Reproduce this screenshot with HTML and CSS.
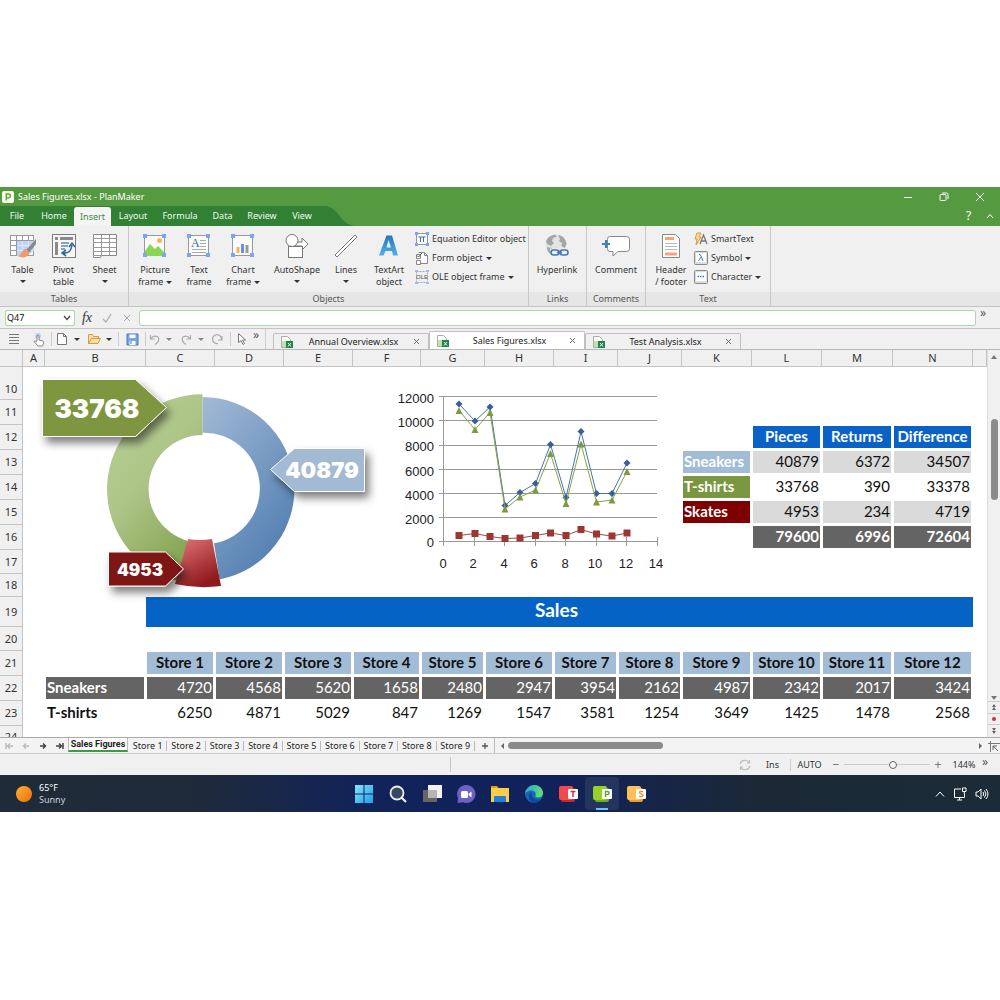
FILE: index.html
```html
<!DOCTYPE html>
<html lang="en">
<head>
<meta charset="utf-8">
<meta name="viewport" content="width=device-width, initial-scale=1">
<title>Sales Figures.xlsx - PlanMaker</title>
<link rel="stylesheet" href="styles.css">
</head>
<body>
<main class="desktop">

<header class="titlebar">
  <div class="title-row">
    <svg class="app-icon" viewBox="0 0 12 12" width="12" height="12"><rect width="12" height="12" rx="2" fill="#f4faf0"/><path d="M4.3 9.5V3h2.2a1.9 1.9 0 0 1 0 3.9H4.3" fill="none" stroke="#6aa92f" stroke-width="1.5"/></svg>
    <h1 class="window-title">Sales Figures.xlsx - PlanMaker</h1>
    <div class="window-controls">
      <button aria-label="Minimize"><svg width="10" height="10" viewBox="0 0 10 10"><path d="M1 5.5h8" class="w"/></svg></button>
      <button aria-label="Restore"><svg width="10" height="10" viewBox="0 0 10 10"><rect x="1" y="2.500" width="6" height="6" rx="1" class="w"/><path d="M3 1h4.500q1.500 0 1.500 1.500V7" class="w"/></svg></button>
      <button aria-label="Close"><svg width="10" height="10" viewBox="0 0 10 10"><path d="M1 1l8 8M9 1L1 9" class="w"/></svg></button>
    </div>
  </div>
  <div class="menu-row">
    <nav class="menu">
      <button class="m34">File</button><button class="m40">Home</button><button class="m37 on">Insert</button><button class="m44">Layout</button><button class="m50">Formula</button><button class="m35">Data</button><button class="m44">Review</button><button class="m36">View</button>
    </nav>
    <svg class="menu-tail" width="34" height="20" viewBox="0 0 34 20"><path d="M0 0h5c14 1 14 17 29 20H0z" fill="#318034"/></svg>
    <div class="menu-side">
      <button aria-label="Help">?</button>
      <button aria-label="Collapse ribbon"><svg width="8" height="6" viewBox="0 0 8 6"><path d="M1 5l3-3.500L7 5" class="w"/></svg></button>
    </div>
  </div>
</header>

<section class="ribbon" aria-label="Insert">
  <div class="group tables">
    <div class="tools">
      <button class="big b41"><svg width="28" height="26" viewBox="0 0 28 26"><rect x="1.500" y="2.500" width="23" height="20" fill="#fff" stroke="#999"/><path d="M1 7.500h24M1 12.500h24M1 17.500h24M7.500 3v20M13.500 3v20M19.500 3v20" stroke="#999"/><path d="M8 8h17v10l-8 5H8z" fill="#bcd4fb"/><path d="M8 12.500h17M8 17.500h16M13.500 8v15M19.500 8v12" stroke="#dfeafd"/><path d="M27 6L17 17l3 3 7-9z" fill="#8a8a8a"/><path d="M17 16c-4 0-4 5-8 7 5 3 11 1 11-4z" fill="#f5986a"/></svg><span>Table</span><i class="dn"></i></button>
      <button class="big b41"><svg width="26" height="26" viewBox="0 0 26 26"><rect x="1.500" y="1.500" width="23" height="23" fill="#f7f7f7" stroke="#7d7d7d"/><path d="M4 5.500h3M5.500 9v13" stroke="#8b8b8b" stroke-width="3"/><path d="M9 5.500h13" stroke="#8b8b8b" stroke-width="3"/><path d="M10 10h8M10 13h7M10 16h4" stroke="#5d89b5" stroke-width="1.300"/><path d="M12 20q8 1 9-8M18 14l3-4 3 4M15 17l-4 3 4 3" fill="none" stroke="#33699c" stroke-width="1.600"/></svg><span>Pivot<br>table</span></button>
      <button class="big b41"><svg width="26" height="26" viewBox="0 0 26 26"><path d="M1.500 1.500h23v21h-15l-1 2h-7z" fill="#fff" stroke="#888"/><path d="M1 5.500h23M1 9.500h23M1 14.500h23M1 18.500h23M9.500 2v20M17.500 2v20M1 22.500h8" stroke="#999"/></svg><span>Sheet</span><i class="dn"></i></button>
    </div>
    <h2>Tables</h2>
  </div>
  <div class="group objects">
    <div class="tools">
      <button class="big b44"><svg width="26" height="26" viewBox="0 0 26 26"><rect x="2.500" y="2.500" width="20" height="20" fill="#fbfbfb" stroke="#999"/><path d="M3 18l5-7 5 5 3-3 6 6v4H3z" fill="#8ad554"/><circle cx="17.500" cy="7.500" r="2.500" fill="#f9b25f"/><path d="M1 1h4v4H1zM20 1h4v4h-4zM1 20h4v4H1zM20 20h4v4h-4z" fill="#7aa5f2"/></svg><span>Picture<br>frame <i class="dn"></i></span></button>
      <button class="big b44"><svg width="26" height="26" viewBox="0 0 26 26"><rect x="2.500" y="2.500" width="20" height="20" fill="#fbfbfb" stroke="#999"/><text x="5" y="14" class="ic-a">A</text><path d="M14 7.500h6M14 10.500h6M14 13.500h6M6 16.500h14M6 19.500h14" stroke="#aaa"/><path d="M1 1h4v4H1zM20 1h4v4h-4zM1 20h4v4H1zM20 20h4v4h-4z" fill="#7aa5f2"/></svg><span>Text<br>frame</span></button>
      <button class="big b44"><svg width="26" height="26" viewBox="0 0 26 26"><rect x="2.500" y="2.500" width="20" height="20" fill="#fbfbfb" stroke="#999"/><path d="M8 14v6" stroke="#f6b35c" stroke-width="3"/><path d="M12.500 11v9" stroke="#5b95ea" stroke-width="3"/><path d="M17 12v8" stroke="#9a9a9a" stroke-width="3"/><path d="M1 1h4v4H1zM20 1h4v4h-4zM1 20h4v4H1zM20 20h4v4h-4z" fill="#7aa5f2"/></svg><span>Chart<br>frame <i class="dn"></i></span></button>
      <button class="big b64"><svg width="26" height="26" viewBox="0 0 26 26"><path d="M11 9h7V5l6 6-6 6v-4h-7z" fill="#fff" stroke="#777"/><circle cx="8" cy="7.500" r="6" fill="#fff" stroke="#777"/><rect x="4.500" y="13.500" width="14" height="11" fill="#fff" stroke="#777"/></svg><span>AutoShape</span><i class="dn"></i></button>
      <button class="big b34"><svg width="26" height="26" viewBox="0 0 26 26"><path d="M2 22L22 2l2 2L4 24z" fill="#fff" stroke="#777"/></svg><span>Lines</span><i class="dn"></i></button>
      <button class="big b52"><svg width="26" height="26" viewBox="0 0 26 26"><defs><linearGradient id="ta" x1="0" y1="0" x2="0" y2="1"><stop offset="0" stop-color="#2574b8"/><stop offset="1" stop-color="#4fb2ee"/></linearGradient></defs><path d="M10.500 2.500h5.500l6 20h-5l-1-4.500H9.500L7.500 22.500h-4.500zM12.500 7L10.500 14.500h4.500z" fill="url(#ta)"/></svg><span>TextArt<br>object</span></button>
      <div class="stack">
        <button><svg width="14" height="14" viewBox="0 0 14 14"><rect x="1.500" y="1.500" width="11" height="11" fill="#fafafa" stroke="#999"/><path d="M3.500 5h7M5.500 5v5M8.500 5v5" stroke="#3777b5" fill="none"/><path d="M0 0h3v3H0zM11 0h3v3h-3zM0 11h3v3H0zM11 11h3v3h-3z" fill="#7aa5f2"/></svg>Equation Editor object</button>
        <button><svg width="14" height="14" viewBox="0 0 14 14"><path d="M3.500 1.500h6l3 3v8h-9" fill="#fff" stroke="#888"/><path d="M9.500 1.500v3h3" fill="none" stroke="#888"/><path d="M1.500 3.500h4v4h-4zM1.500 9.500h4v4h-4z" fill="#fff" stroke="#888"/><path d="M2 4.500l1.500 1.500L7 2" fill="none" stroke="#555"/></svg>Form object <i class="dn"></i></button>
        <button><svg width="14" height="14" viewBox="0 0 14 14"><rect x="1.500" y="1.500" width="11" height="11" fill="#eee" stroke="#aaa" stroke-dasharray="2 1"/><text x="1" y="9" class="ic-ole">OLE</text><path d="M0 0h3v2H0zM11 0h3v2h-3zM0 12h3v2H0zM11 12h3v2h-3z" fill="#9bbcf2"/></svg>OLE object frame <i class="dn"></i></button>
      </div>
    </div>
    <h2>Objects</h2>
  </div>
  <div class="group links">
    <div class="tools"><button class="big b56"><svg width="26" height="26" viewBox="0 0 26 26"><circle cx="12" cy="12" r="10.500" fill="#e4e4e4"/><path d="M2 8c2-4 5-6 9-6.500l2 2-4 1.500-1 3 2 2-3 3-4-2zM14 2c6 1 8 5 8.500 9l-2 4-3-2 .5-3-3-2 1-2zM3 14l5 1 2 5-1 2c-4-1-6-4-6-8z" fill="#a5a5a5"/><path d="M6 15.500h20v8H6z" fill="#f0f0f0"/><g fill="none" stroke="#4078b4" stroke-width="1.600"><rect x="7" y="17" width="8" height="5" rx="2.500"/><rect x="16" y="17" width="8" height="5" rx="2.500"/><path d="M13 19.500h5"/></g></svg><span>Hyperlink</span></button></div>
    <h2>Links</h2>
  </div>
  <div class="group comments">
    <div class="tools"><button class="big b56"><svg width="30" height="26" viewBox="0 0 30 26"><path d="M8.500 3.500h17q3 0 3 3v9q0 3-3 3H17l-5 4.500v-4.500H8.500q-2 0-2-3v-9q0-3 2-3z" fill="#fff" stroke="#888"/><path d="M1 11h8M5 7v8" stroke="#3b7fc4" stroke-width="2"/></svg><span>Comment</span></button></div>
    <h2>Comments</h2>
  </div>
  <div class="group text">
    <div class="tools"><button class="big b46"><svg width="26" height="26" viewBox="0 0 26 26"><path d="M4.500 1.500h13l4 4v19h-17z" fill="#fff" stroke="#888"/><path d="M7 5.500h9M7 21h12" stroke="#f6a27c" stroke-width="3"/><path d="M7 10.500h12M7 13.500h12M7 16.500h12" stroke="#bbb"/></svg><span>Header<br>/ footer</span></button>
      <div class="stack">
        <button><svg width="14" height="14" viewBox="0 0 14 14"><path d="M3 1h4L5 5h2l-5 8 1-6H1z" fill="#fcd9a0" stroke="#dd9a3c"/><path d="M6 12l3.500-9L13 12M7.500 9h4.500" fill="none" stroke="#777" stroke-width="1.300"/></svg>SmartText</button>
        <button><svg width="14" height="14" viewBox="0 0 14 14"><rect x=".5" y=".5" width="13" height="13" rx="1" fill="#ddd" stroke="#888"/><rect x="2" y="2" width="10" height="9" fill="#fff"/><path d="M5 3.500q1.500-.5 2 1.500l2 5M7 6l-2.500 4" fill="none" stroke="#3b7fc4"/></svg>Symbol <i class="dn"></i></button>
        <button><svg width="14" height="14" viewBox="0 0 14 14"><rect x=".5" y=".5" width="13" height="13" rx="1" fill="#ddd" stroke="#888"/><rect x="2" y="2" width="10" height="9" fill="#fff"/><path d="M3.500 6.500h7" stroke="#3b7fc4" stroke-width="1.500" stroke-dasharray="1.500 1"/></svg>Character <i class="dn"></i></button>
      </div>
    </div>
    <h2>Text</h2>
  </div>
</section>

<section class="formula-bar">
  <div class="namebox"><select aria-label="Cell reference"><option>Q47</option></select><svg width="8" height="6" viewBox="0 0 8 6"><path d="M1 1l3 3.500L7 1" fill="none" stroke="#444" stroke-width="1.200"/></svg></div>
  <button class="fx" aria-label="Insert function">fx</button>
  <button aria-label="Accept"><svg width="10" height="10" viewBox="0 0 10 10"><path d="M1 6l3 3 5-8" fill="none" stroke="#aaa" stroke-width="1.200"/></svg></button>
  <button aria-label="Cancel"><svg width="10" height="10" viewBox="0 0 10 10"><path d="M2 2l6 6M8 2L2 8" stroke="#aaa"/></svg></button>
  <input type="text" aria-label="Formula">
  <button class="more" aria-label="More">»</button>
</section>

<section class="toolbar">
  <button class="t28" aria-label="Menu"><svg width="12" height="14" viewBox="0 0 12 14"><path d="M1 2.500h10M1 5.500h10M1 8.500h10M1 11.500h10" stroke="#777"/></svg></button>
  <button class="t20" aria-label="Touch mode"><svg width="13" height="15" viewBox="0 0 13 15"><circle cx="6" cy="4" r="3" fill="#b7cff6"/><path d="M5 9V4q1-1.500 2 0v4l4 1q1 .5.500 2l-1 3H6L2 9.500q.5-1.500 3 .5" fill="#fff" stroke="#888"/></svg></button>
  <i class="sep"></i>
  <button class="t14" aria-label="New"><svg width="12" height="14" viewBox="0 0 12 14"><path d="M1.500 1.500h6l3 3v8h-9zM7.500 1.500v3h3" fill="#fff" stroke="#777"/></svg></button>
  <button class="t16" aria-label="New options"><i class="dn"></i></button>
  <button class="t18" aria-label="Open"><svg width="15" height="14" viewBox="0 0 15 14"><path d="M1.500 11.500v-9h4l1 2h5v2M1.500 11.500l3-5h9l-2.500 5z" fill="#fde0b0" stroke="#e0973a"/></svg></button>
  <button class="t12" aria-label="Open options"><i class="dn"></i></button>
  <i class="sep"></i>
  <button class="t20" aria-label="Save"><svg width="13" height="13" viewBox="0 0 13 13"><path d="M1 1h11v11H1z" fill="#78a3e8" stroke="#4a74b8"/><path d="M3.500 1.500h6v3.500h-6zM3.500 8h6v4h-6z" fill="#fff"/><path d="M5 8v3" stroke="#4a74b8"/></svg></button>
  <i class="sep"></i>
  <button class="t12" aria-label="Undo"><svg width="12" height="12" viewBox="0 0 12 12"><path d="M1.500 2v4h4M2 5.500q3-4 7-1.500 2.500 4-3 7.500" fill="none" stroke="#aaa" stroke-width="1.200"/></svg></button>
  <button class="t16" aria-label="Undo options"><i class="dn soft"></i></button>
  <button class="t18" aria-label="Redo"><svg width="12" height="12" viewBox="0 0 12 12"><path d="M10.500 2v4h-4M10 5.500Q7 1.500 3 4q-2.500 4 3 7.500" fill="none" stroke="#aaa" stroke-width="1.200"/></svg></button>
  <button class="t12" aria-label="Redo options"><i class="dn soft"></i></button>
  <button class="t20" aria-label="Repeat"><svg width="12" height="12" viewBox="0 0 12 12"><path d="M11 3v4H7M10.500 6.500A4.500 4.500 0 1 0 7 10.500" fill="none" stroke="#aaa" stroke-width="1.200"/></svg></button>
  <i class="sep"></i>
  <button class="t16" aria-label="Select"><svg width="10" height="14" viewBox="0 0 10 14"><path d="M1.500 1.500v9l2.500-2 2 4 1.500-1-2-3.500h3z" fill="#fff" stroke="#777"/></svg></button>
  <button class="t12 more" aria-label="More">»</button>
  <i class="sep tall"></i>
  <div class="doc-tabs">
    <div class="doc-tab"><svg width="14" height="14" viewBox="0 0 14 14"><path d="M1.500 1.500h6l3 3v8h-9z" fill="#fff" stroke="#aaa"/><path d="M2 6h4v6H2z" fill="#bfe3a8"/><path d="M6 6h7v7H6z" fill="#1d8348"/><path d="M8 8l3 3.500M11 8l-3 3.500" stroke="#fff"/></svg><button>Annual Overview.xlsx</button><button class="x" aria-label="Close Annual Overview.xlsx"><svg width="7" height="7" viewBox="0 0 7 7"><path d="M1 1l5 5M6 1L1 6" stroke="#666"/></svg></button></div>
    <div class="doc-tab on"><svg width="14" height="14" viewBox="0 0 14 14"><path d="M1.500 1.500h6l3 3v8h-9z" fill="#fff" stroke="#aaa"/><path d="M2 6h4v6H2z" fill="#bfe3a8"/><path d="M6 6h7v7H6z" fill="#1d8348"/><path d="M8 8l3 3.500M11 8l-3 3.500" stroke="#fff"/></svg><button>Sales Figures.xlsx</button><button class="x" aria-label="Close Sales Figures.xlsx"><svg width="7" height="7" viewBox="0 0 7 7"><path d="M1 1l5 5M6 1L1 6" stroke="#666"/></svg></button></div>
    <div class="doc-tab"><svg width="14" height="14" viewBox="0 0 14 14"><path d="M1.500 1.500h6l3 3v8h-9z" fill="#fff" stroke="#aaa"/><path d="M2 6h4v6H2z" fill="#bfe3a8"/><path d="M6 6h7v7H6z" fill="#1d8348"/><path d="M8 8l3 3.500M11 8l-3 3.500" stroke="#fff"/></svg><button>Test Analysis.xlsx</button><button class="x" aria-label="Close Test Analysis.xlsx"><svg width="7" height="7" viewBox="0 0 7 7"><path d="M1 1l5 5M6 1L1 6" stroke="#666"/></svg></button></div>
  </div>
</section>

<section class="work">
  <div class="sheet">
    <table class="grid">
      <colgroup><col class="c23"><col class="c22"><col class="c101"><col class="c69"><col class="c69"><col class="c69"><col class="c68"><col class="c64"><col class="c69"><col class="c64"><col class="c64"><col class="c70"><col class="c70"><col class="c71"><col class="c80"><col></colgroup>
      <thead><tr><th></th><th>A</th><th>B</th><th>C</th><th>D</th><th>E</th><th>F</th><th>G</th><th>H</th><th>I</th><th>J</th><th>K</th><th>L</th><th>M</th><th>N</th><th></th></tr></thead>
      <tbody>
        <tr class="h33"><th>10</th><td colspan="15"></td></tr>
        <tr><th>11</th><td colspan="15"></td></tr>
        <tr><th>12</th><td colspan="11"></td><td class="blue">Pieces</td><td class="blue">Returns</td><td class="blue">Difference</td><td></td></tr>
        <tr><th>13</th><td colspan="10"></td><td class="name sky">Sneakers</td><td class="pale">40879</td><td class="pale">6372</td><td class="pale">34507</td><td></td></tr>
        <tr><th>14</th><td colspan="10"></td><td class="name olive">T-shirts</td><td>33768</td><td>390</td><td>33378</td><td></td></tr>
        <tr><th>15</th><td colspan="10"></td><td class="name maroon">Skates</td><td class="pale">4953</td><td class="pale">234</td><td class="pale">4719</td><td></td></tr>
        <tr><th>16</th><td colspan="11"></td><td class="gray b">79600</td><td class="gray b">6996</td><td class="gray b">72604</td><td></td></tr>
        <tr class="h24"><th>17</th><td colspan="15"></td></tr>
        <tr class="h23"><th>18</th><td colspan="15"></td></tr>
        <tr class="h30"><th>19</th><td colspan="2"></td><td colspan="12" class="banner">Sales</td><td></td></tr>
        <tr class="h24"><th>20</th><td colspan="15"></td></tr>
        <tr><th>21</th><td></td><td></td><td class="store">Store 1</td><td class="store">Store 2</td><td class="store">Store 3</td><td class="store">Store 4</td><td class="store">Store 5</td><td class="store">Store 6</td><td class="store">Store 7</td><td class="store">Store 8</td><td class="store">Store 9</td><td class="store">Store 10</td><td class="store">Store 11</td><td class="store">Store 12</td><td></td></tr>
        <tr><th>22</th><td></td><td class="name gray">Sneakers</td><td class="gray">4720</td><td class="gray">4568</td><td class="gray">5620</td><td class="gray">1658</td><td class="gray">2480</td><td class="gray">2947</td><td class="gray">3954</td><td class="gray">2162</td><td class="gray">4987</td><td class="gray">2342</td><td class="gray">2017</td><td class="gray">3424</td><td></td></tr>
        <tr><th>23</th><td></td><td class="name">T-shirts</td><td>6250</td><td>4871</td><td>5029</td><td>847</td><td>1269</td><td>1547</td><td>3581</td><td>1254</td><td>3649</td><td>1425</td><td>1478</td><td>2568</td><td></td></tr>
        <tr class="h11"><th><div class="cut">24</div></th><td colspan="15"></td></tr>
      </tbody>
    </table>

    <svg class="chart donut" width="350" height="235" viewBox="35 370 350 235" role="img" aria-label="Share of pieces by product">
      <defs>
        <linearGradient id="gb" x1="0" y1="0" x2=".6" y2="1"><stop offset="0" stop-color="#a3bad6"/><stop offset="1" stop-color="#5480b2"/></linearGradient>
        <linearGradient id="gg" x1="0" y1="0" x2=".6" y2="1"><stop offset="0" stop-color="#b9d095"/><stop offset=".5" stop-color="#aec588"/><stop offset="1" stop-color="#86a552"/></linearGradient>
        <linearGradient id="gr" x1="0" y1="0" x2=".5" y2="1"><stop offset="0" stop-color="#e2757a"/><stop offset="1" stop-color="#8f1a1c"/></linearGradient>
        <filter id="sh" x="-20%" y="-20%" width="150%" height="170%"><feDropShadow dx="4" dy="6" stdDeviation="4" flood-color="#000" flood-opacity=".5"/></filter>
      </defs>
      <path d="M202.500 397A92 92 0 0 1 219.500 579.400L214 543.300A55.700 55.700 0 0 0 202.500 432.800z" fill="url(#gb)"/>
      <path d="M202.500 394.300A95 95 0 0 0 180 581.700L188 541A54 54 0 0 1 202.500 435z" fill="url(#gg)"/>
      <path d="M188 539q12 2 24 0l9 47q-23 3-46-2z" fill="url(#gr)"/>
      <g stroke="#fff" filter="url(#sh)">
        <path d="M42.500 379.500h93l31 28-31 29h-93z" fill="#7e9641"/>
      </g>
      <g stroke="#fff" filter="url(#sh)">
        <path d="M364.500 448.500h-70l-24 21 24 22h70z" fill="#a2bad3"/>
      </g>
      <g stroke="#fff" filter="url(#sh)">
        <path d="M108.500 552h57l18 17-18 17h-57z" fill="#7f1512"/>
      </g>
      <g class="callout"><text x="97" y="418" class="s26">33768</text><text x="322" y="478" class="s22">40879</text><text x="140" y="576" class="s17">4953</text></g>
    </svg>

    <svg class="chart line" width="290" height="190" viewBox="380 385 290 190" role="img" aria-label="Pieces, returns and difference by store">
      <path d="M439 396.500h218M439 420.500h218M439 445.500h218M439 469.500h218M439 493.500h218M439 517.500h218M439 541.500h218M443.500 396v150M474.500 537v9M504.500 537v9M535.500 537v9M565.500 537v9M596.500 537v9M626.500 537v9M657.500 537v9" stroke="#999" fill="none"/>
      <g class="axis y"><text x="434" y="403">12000</text><text x="434" y="427">10000</text><text x="434" y="451">8000</text><text x="434" y="476">6000</text><text x="434" y="500">4000</text><text x="434" y="524">2000</text><text x="434" y="547">0</text></g>
      <g class="axis x"><text x="443" y="568">0</text><text x="473" y="568">2</text><text x="504" y="568">4</text><text x="534" y="568">6</text><text x="565" y="568">8</text><text x="595" y="568">10</text><text x="626" y="568">12</text><text x="656" y="568">14</text></g>
      <defs>
        <marker id="mb" markerUnits="userSpaceOnUse" markerWidth="8" markerHeight="8" refX="4" refY="4"><path d="M4 .5L7.500 4 4 7.500.5 4z" fill="#365f9c"/></marker>
        <marker id="mg" markerUnits="userSpaceOnUse" markerWidth="8" markerHeight="8" refX="4" refY="4"><path d="M4 .5L7.500 7.500H.5z" fill="#7d9a3c"/></marker>
        <marker id="mr" markerUnits="userSpaceOnUse" markerWidth="8" markerHeight="8" refX="4" refY="4"><path d="M.5.5h7v7h-7z" fill="#9c3634"/></marker>
      </defs>
      <g fill="none">
        <polyline points="459,404 475,421 490,407 505,505.500 520,492.500 535.500,483.500 550.500,444.500 566,497.500 581,431.500 596.500,493.500 612,493.500 627,463" stroke="#4573b4" marker-start="url(#mb)" marker-mid="url(#mb)" marker-end="url(#mb)"/>
        <polyline points="459,410.500 475,429.500 490,412.500 505,509 520,497 535.500,490 550.500,453.500 566,503.500 581,444 596.500,502 612,500 627,471.500" stroke="#86a440" marker-start="url(#mg)" marker-mid="url(#mg)" marker-end="url(#mg)"/>
        <polyline points="459,535.500 475,533.500 490,536.500 505,538.500 520,538 535.500,535.500 550.500,533 566,535.500 581,529.500 596.500,534 612,536 627,533" stroke="#a84644" marker-start="url(#mr)" marker-mid="url(#mr)" marker-end="url(#mr)"/>
      </g>
    </svg>
  </div>
  <div class="vscroll">
    <svg width="8" height="5" viewBox="0 0 8 5"><path d="M4 0l3 4H1z" fill="#777"/></svg>
    <i class="vthumb"></i>
    <svg class="low" width="8" height="5" viewBox="0 0 8 5"><path d="M1 0h6L4 4z" fill="#777"/></svg>
    <svg width="12" height="36" viewBox="0 0 12 36"><path d="M0 .5h12M0 12.500h12M0 23.500h12" stroke="#ccc"/><path d="M6 3l2 3H4zM6 6l2 3H4zM4 27h4L6 30zM4 30h4l-2 3z" fill="#666"/><circle cx="6" cy="18" r="2" fill="#e02c2c"/></svg>
  </div>
</section>

<section class="sheet-bar">
  <div class="nav">
    <button aria-label="First sheet"><svg width="8" height="8" viewBox="0 0 8 8"><path d="M1 1v6M8 4H3M5 1.500L2.500 4 5 6.500" class="off"/></svg></button>
    <button aria-label="Previous sheet"><svg width="8" height="8" viewBox="0 0 8 8"><path d="M7 4H2M4 1.500L1.500 4 4 6.500" class="off"/></svg></button>
    <button aria-label="Next sheet"><svg width="8" height="8" viewBox="0 0 8 8"><path d="M1 4h5M4 1.500L6.500 4 4 6.500" class="ok"/></svg></button>
    <button aria-label="Last sheet"><svg width="8" height="8" viewBox="0 0 8 8"><path d="M7 1v6M0 4h5M3 1.500L5.500 4 3 6.500" class="ok"/></svg></button>
  </div>
  <button class="sheet-tab on">Sales Figures</button>
  <div class="sheet-tabs"><button>Store 1</button><button>Store 2</button><button>Store 3</button><button>Store 4</button><button>Store 5</button><button>Store 6</button><button>Store 7</button><button>Store 8</button><button>Store 9</button></div>
  <button class="plus" aria-label="Add sheet"><svg width="8" height="8" viewBox="0 0 8 8"><path d="M1 4h6M4 1v6" stroke="#555" stroke-width="1.300"/></svg></button>
  <div class="hscroll">
    <svg width="5" height="8" viewBox="0 0 5 8"><path d="M4 1v6L1 4z" fill="#666"/></svg>
    <i class="hthumb"></i>
    <svg class="end" width="5" height="8" viewBox="0 0 5 8"><path d="M1 1v6l3-3z" fill="#666"/></svg>
  </div>
  <svg class="corner" width="13" height="16" viewBox="0 0 13 16"><path d="M1 5.500h12M3.500 3v11" stroke="#777"/><path d="M6 12V8h4M6 8l5 5" stroke="#666" fill="none"/></svg>
</section>

<footer class="status">
  <span class="status-left"></span>
  <span class="status-mid"></span>
  <svg width="12" height="12" viewBox="0 0 12 12"><path d="M1 5a5 5 0 0 1 9-1.500M11 7a5 5 0 0 1-9 1.500M10.500 1v3H8M1.500 11V8H4" fill="none" stroke="#bbb" stroke-width="1.200"/></svg>
  <span class="ins">Ins</span>
  <span class="auto">AUTO</span>
  <span class="zoom">
    <button aria-label="Zoom out">−</button><input type="range" aria-label="Zoom" min="0" max="100" value="58"><button aria-label="Zoom in">+</button>
  </span>
  <span class="pct">144%</span>
  <button class="more" aria-label="More">»</button>
</footer>

<section class="taskbar">
  <div class="weather">
    <svg width="16" height="16" viewBox="0 0 16 16"><defs><linearGradient id="sun" x1="0" y1="0" x2="1" y2="1"><stop offset="0" stop-color="#fdb42c"/><stop offset="1" stop-color="#ee6c14"/></linearGradient></defs><circle cx="8" cy="8" r="8" fill="url(#sun)"/></svg>
    <div><div>65°F</div><div class="dim">Sunny</div></div>
  </div>
  <div class="apps">
    <button aria-label="Start"><svg width="20" height="20" viewBox="0 0 20 20"><defs><linearGradient id="wn" x1="0" y1="0" x2="1" y2="1"><stop offset="0" stop-color="#86e4fb"/><stop offset="1" stop-color="#1ea0e8"/></linearGradient></defs><path d="M1 1h8.500v8.500H1zM10.500 1H19v8.500h-8.500zM1 10.500h8.500V19H1zM10.500 10.500H19V19h-8.500z" fill="url(#wn)"/></svg></button>
    <button aria-label="Search"><svg width="20" height="20" viewBox="0 0 20 20"><circle cx="9" cy="9" r="6.500" fill="#3a4763" stroke="#eee" stroke-width="1.800"/><path d="M13.500 13.500L18 18" stroke="#eee" stroke-width="2.200"/></svg></button>
    <button aria-label="Task view"><svg width="20" height="20" viewBox="0 0 20 20"><path d="M1 6h14v12H1z" fill="#666"/><path d="M6 1h14v13H6z" fill="#f2f2f2"/><path d="M6 6h9v8H6z" fill="#b5b5b5"/></svg></button>
    <button aria-label="Chat"><svg width="20" height="20" viewBox="0 0 20 20"><path d="M10 1a9 9 0 1 1-3 17.300L1.500 19 2 14A9 9 0 0 1 10 1z" fill="#6c62c5"/><rect x="5" y="7" width="7" height="7" rx="1.500" fill="#fff"/><path d="M12.500 10l3-2.500v6l-3-2.500z" fill="#fff"/></svg></button>
    <button aria-label="File Explorer"><svg width="20" height="20" viewBox="0 0 20 20"><path d="M1 2h6l2 2.500H1z" fill="#e59a1c"/><path d="M1 4h18v14H1z" fill="#fccd4a"/><path d="M4 18v-5q0-1 1-1h10q1 0 1 1v5z" fill="#2282d8"/></svg></button>
    <button aria-label="Edge"><svg width="20" height="20" viewBox="0 0 20 20"><defs><linearGradient id="eg" x1="0" y1="0" x2="1" y2=".3"><stop offset="0" stop-color="#2aa3e2"/><stop offset="1" stop-color="#5ddc73"/></linearGradient></defs><circle cx="10" cy="10" r="9" fill="#1766b5"/><path d="M1 9.500C2 4 6 1 10.500 1 15.500 1 19 5 19 9c0 3-2 4.500-5 4.500-2.500 0-3-1-2.500-2C12.500 9 10.500 6.500 7.500 6.500 4 6.500 2 8.500 1 9.500z" fill="url(#eg)"/><path d="M7 8c-3 2-3 8 2 11 3 0 6-1 8-4-3 1.500-10 1-10-7z" fill="#0d4a93"/></svg></button>
    <button aria-label="TextMaker"><svg width="20" height="20" viewBox="0 0 20 20"><rect x="3" y="4" width="14" height="14" rx="2" fill="#c9252b"/><rect x="1" y="2" width="14" height="14" rx="2" fill="#f04a4d"/><rect x="10" y="5" width="10" height="10" rx="1" fill="#fff"/><path d="M12.500 7.500h5M15 7.500v5.500" stroke="#d8313a" stroke-width="1.500"/></svg></button>
    <button class="active" aria-label="PlanMaker"><svg width="20" height="20" viewBox="0 0 20 20"><rect x="3" y="4" width="14" height="14" rx="2" fill="#6fae1e"/><rect x="1" y="2" width="14" height="14" rx="2" fill="#97cf2c"/><rect x="10" y="5" width="10" height="10" rx="1" fill="#fff"/><path d="M13.500 13V7.500h1.500q2 0 2 1.600t-2 1.600h-1.500" fill="none" stroke="#5f9f2a" stroke-width="1.300"/></svg></button>
    <button aria-label="Presentations"><svg width="20" height="20" viewBox="0 0 20 20"><rect x="3" y="4" width="14" height="14" rx="2" fill="#f29a2a"/><rect x="1" y="2" width="14" height="14" rx="2" fill="#fdc05a"/><rect x="10" y="5" width="10" height="10" rx="1" fill="#fff"/><path d="M17 7.800q-3.500-1-3.500.8c0 1.500 3.500 1 3.500 2.700 0 1.700-2.500 1.500-3.800.8" fill="none" stroke="#ef8b2c" stroke-width="1.300"/></svg></button>
  </div>
  <div class="tray">
    <svg width="10" height="8" viewBox="0 0 10 8"><path d="M1 6.500L5 2l4 4.500" class="w"/></svg>
    <svg width="14" height="14" viewBox="0 0 14 14"><path d="M8 2H1.500v8.500h10V7M4 13h5M6.500 10.500V13M9.500 1v3.500h3.500V1zM11.300 4.500V7" class="w"/></svg>
    <svg width="14" height="14" viewBox="0 0 14 14"><path d="M1 5v4h2l3 3V2L3 5zM8 5q1.500 2 0 4M9.500 3.500q3 3.500 0 7M11 2q4 5 0 10" class="w"/></svg>
  </div>
</section>
</main>
</body>
</html>
```

FILE: styles.css
```css
* { box-sizing: border-box; }

body {
  margin: 0;
  background: #fff;
  color: #333;
  font-family: "Noto Sans", "Open Sans", sans-serif;
  font-size: 9px;
  line-height: 12px;
}

.desktop { padding: 187px 0; }

button, input, select { font: inherit; color: inherit; }
button { margin: 0; padding: 0; border: 0; background: none; }
svg { display: block; flex: none; }
h1, h2 { margin: 0; font-size: inherit; font-weight: 400; }

.w { fill: none; stroke: #fff; stroke-width: 1; }

.dn {
  display: inline-block;
  border: 3px solid transparent;
  border-top-color: #333;
  border-bottom: 0;
  vertical-align: middle;
}
.dn.soft { border-top-color: #888; }

/* Title bar and menu */
.titlebar { background: #559a41; color: #fff; }
.title-row { display: flex; align-items: center; height: 19px; padding-left: 2px; gap: 4px; }
.window-controls { display: flex; margin-left: auto; padding-right: 2px; }
.window-controls button { width: 36px; height: 17px; display: grid; place-items: center; }
.menu-row { display: flex; height: 20px; }
.menu { display: flex; background: #318034; }
.menu button { color: #f2f8ef; }
.menu button.on { margin-top: 1px; border-radius: 3px 3px 0 0; background: #f4f4f4; color: #3c8a3a; }
.m34 { width: 34px; } .m35 { width: 35px; } .m36 { width: 36px; } .m37 { width: 37px; }
.m40 { width: 40px; } .m44 { width: 44px; } .m50 { width: 50px; }
.menu-side { margin-left: auto; display: flex; }
.menu-side button { width: 21px; display: grid; place-items: center; font-size: 12px; }

/* Ribbon */
.ribbon { display: flex; border-bottom: 1px solid #c4c4c4; background: linear-gradient(#f0f0f0 66px, #e6e6e6 66px); }
.group { display: flex; flex-direction: column; border-right: 1px solid #c8c8c8; }
.group h2 { height: 14px; line-height: 14px; text-align: center; color: #555; }
.tools { display: flex; height: 66px; padding-top: 7px; }
.tables .tools { padding-left: 2px; padding-right: 3px; }
.objects .tools { padding-left: 4px; padding-right: 2px; }
.links .tools { padding-right: 1px; }
.comments .tools { padding-left: 1px; padding-right: 1px; }
.text .tools { padding-left: 2px; padding-right: 5px; }
.big { display: flex; flex-direction: column; align-items: center; white-space: nowrap; }
.big svg { margin-bottom: 5px; }
.big > .dn { margin-top: 4px; }
.b34 { width: 34px; } .b41 { width: 41px; } .b44 { width: 44px; } .b46 { width: 46px; }
.b52 { width: 52px; } .b56 { width: 56px; } .b64 { width: 64px; }
.stack { display: flex; flex-direction: column; justify-content: space-between; width: 111px; height: 52px; margin-top: -1px; white-space: nowrap; }
.text .stack { width: 71px; }
.stack button { display: flex; align-items: center; gap: 3px; height: 14px; }
.ic-a { font: 12px "Liberation Serif", serif; fill: #33699c; }
.ic-ole { font: 6px "Liberation Sans", sans-serif; fill: #555; }

/* Formula bar */
.formula-bar { display: flex; align-items: center; height: 22px; padding-left: 5px; background: #f0f0f0; border-bottom: 1px solid #c4c4c4; }
.formula-bar button { width: 20px; display: grid; place-items: center; }
.namebox { position: relative; width: 70px; margin-right: 2px; }
.namebox select { display: block; width: 100%; height: 16px; padding: 0 1px; appearance: none; border: 1px solid #a9d8a9; border-radius: 2px; background: #fff; color: #111; }
.namebox svg { position: absolute; right: 4px; top: 5px; }
.formula-bar .fx { font: italic 14px "Liberation Serif", serif; color: #333; }
.formula-bar input { flex: 1; height: 16px; margin-left: 2px; border: 1px solid #a9d8a9; border-radius: 3px; background: #fff; }
.more { font-size: 12px; color: #555; }
.formula-bar .more { width: 24px; padding-right: 10px; align-self: flex-start; }

/* Toolbar and document tabs */
.toolbar { display: flex; align-items: center; height: 21px; background: #f0f0f0; border-bottom: 1px solid #b8b8b8; }
.toolbar > button { display: grid; place-items: center; height: 18px; }
.toolbar > .more { height: 12px; align-self: flex-start; }
.t12 { width: 12px; } .t14 { width: 14px; } .t16 { width: 16px; } .t18 { width: 18px; } .t20 { width: 20px; } .t28 { width: 28px; }
.sep { width: 1px; height: 14px; margin: 0 3px; background: #ccc; }
.sep.tall { height: 20px; }
.doc-tabs { display: flex; align-items: flex-end; align-self: stretch; margin-left: 4px; }
.doc-tab { display: flex; align-items: center; width: 156px; height: 16px; padding: 0 8px 0 6px; border: 1px solid #c0c0c0; border-bottom: 0; border-radius: 2px 2px 0 0; color: #222; }
.doc-tab.on { height: 18px; background: #fff; }
.doc-tab button:first-of-type { flex: 1; }

/* Spreadsheet */
.work { display: flex; background: #fff; }
.sheet { position: relative; flex: 1; min-width: 0; }
.grid { width: 100%; table-layout: fixed; border-spacing: 0; font: 15px/18px Lato, sans-serif; color: #111; }
.c22 { width: 22px; } .c23 { width: 23px; } .c64 { width: 64px; } .c68 { width: 68px; } .c69 { width: 69px; }
.c70 { width: 70px; } .c71 { width: 71px; } .c80 { width: 80px; } .c101 { width: 101px; }
.grid tr { height: 25px; }
.grid thead tr { height: 17px; }
.grid .h11 { height: 11px; } .grid .h23 { height: 23px; } .grid .h24 { height: 24px; }
.grid .h30 { height: 30px; } .grid .h33 { height: 33px; }
.grid th { padding: 0; background: #f0f0f0; border-right: 1px solid #c4c4c4; border-bottom: 1px solid #c4c4c4; font: 11px/12px "Noto Sans", sans-serif; color: #333; }
.grid td { padding: 0 1px 3px; border: solid #fff; border-width: 1px 2px 2px 1px; text-align: right; white-space: nowrap; }
.grid .h11 td, .grid .h11 th { padding: 0; border-bottom: 0; }
.h33 th { vertical-align: bottom; }
.grid .h33 th { padding-bottom: 4px; }
.cut { height: 11px; padding-top: 5px; overflow: hidden; }
.grid .blue, .grid .store { padding: 0 0 3px; text-align: center; font-weight: 700; }
.blue { background: #0a62c6; color: #fff; }
.store { background: #a2bcd6; }
.grid .name { text-align: left; font-weight: 700; }
.sky { background: #a2bcd6; color: #fff; }
.olive { background: #7a9640; color: #fff; }
.maroon { background: #7e0000; color: #fff; }
.pale { background: #dadada; }
.gray { background: #646464; color: #fff; }
.b { font-weight: 700; }
.grid .banner { padding: 0 6px 5px 0; border: 0; background: #0563c5; color: #fff; text-align: center; font-size: 19px; font-weight: 700; }

/* Charts float over the cells */
.chart { position: absolute; }
.donut { left: 35px; top: 20px; }
.line { left: 380px; top: 35px; }
.callout { font-family: Inter, sans-serif; font-weight: 900; fill: #fff; text-anchor: middle; }
.s17 { font-size: 17px; } .s22 { font-size: 22px; } .s26 { font-size: 26px; }
.axis { font: 13px "Liberation Sans", sans-serif; fill: #222; }
.axis.y { text-anchor: end; }
.axis.x { text-anchor: middle; }

.vscroll { display: flex; flex-direction: column; align-items: center; width: 13px; padding-top: 5px; background: #f0f0f0; border-left: 1px solid #ddd; }
.vthumb { width: 7px; height: 81px; margin-top: 59px; border-radius: 4px; background: #8b8b8b; }
.vscroll .low { margin-top: auto; }

/* Sheet tabs */
.sheet-bar { display: flex; height: 17px; background: #f3f3f3; border-top: 1px solid #aaa; border-bottom: 1px solid #ccc; color: #222; }
.nav { display: flex; width: 68px; }
.nav button { width: 17px; display: grid; place-items: center; }
.off { fill: none; stroke: #bbb; stroke-width: 1.5; }
.ok { fill: none; stroke: #444; stroke-width: 1.5; }
.sheet-tab { width: 60px; height: 14px; border: 1px solid #bbb; border-top: 0; border-bottom: 2px solid #3f9a45; background: #fff; font-family: Roboto, sans-serif; font-weight: 700; white-space: nowrap; }
.sheet-tabs { display: flex; width: 346px; margin-left: 1px; align-items: center; }
.sheet-tabs button { flex: 1; height: 10px; line-height: 10px; border-right: 1px solid #bbb; white-space: nowrap; }
.plus { display: grid; place-items: center; width: 20px; border-right: 1px solid #bbb; }
.hscroll { flex: 1; display: flex; align-items: center; padding: 0 4px 0 5px; gap: 3px; }
.hthumb { width: 155px; height: 7px; border-radius: 4px; background: #8b8b8b; }
.hscroll .end { margin-left: auto; }

/* Status bar */
.status { display: flex; align-items: center; height: 21px; background: #f0f0f0; color: #333; }
.status-left { width: 451px; height: 15px; border-right: 1px solid #c4c4c4; }
.status-mid { flex: 1; }
.ins { width: 40px; padding-left: 4px; text-align: center; border-right: 1px solid #ccc; }
.auto { width: 37px; text-align: center; }
.zoom { display: flex; align-items: center; font-size: 12px; }
.zoom button { width: 16px; color: #777; }
.zoom input { width: 86px; height: 12px; margin: 0; appearance: none; background: linear-gradient(#ccc, #ccc) center / 100% 1px no-repeat; }
.zoom input::-webkit-slider-thumb { appearance: none; width: 8px; height: 8px; border: 1px solid #666; border-radius: 50%; background: #f5f5f5; }
.pct { width: 36px; text-align: center; }
.status .more { width: 18px; height: 16px; align-self: flex-start; line-height: 12px; text-align: left; }

/* Taskbar */
.taskbar { display: grid; grid-template-columns: 1fr auto 1fr; align-items: center; height: 37px; background: linear-gradient(90deg, #1f2b38 0, #1e2a3a 20%, #12235a 36%, #11215a 55%, #1b2936 76%, #1b2b38 100%); color: #fff; }
.weather { display: flex; align-items: center; gap: 7px; padding-left: 16px; }
.dim { color: #ccd2d8; }
.apps { display: flex; }
.apps button { display: grid; place-items: center; width: 34px; height: 33px; }
.apps .active { background: #23345f linear-gradient(#5cc8f5, #5cc8f5) center bottom / 12px 2px no-repeat; border-radius: 4px; }
.tray { display: flex; justify-content: flex-end; align-items: center; gap: 8px; padding-right: 11px; }
```
